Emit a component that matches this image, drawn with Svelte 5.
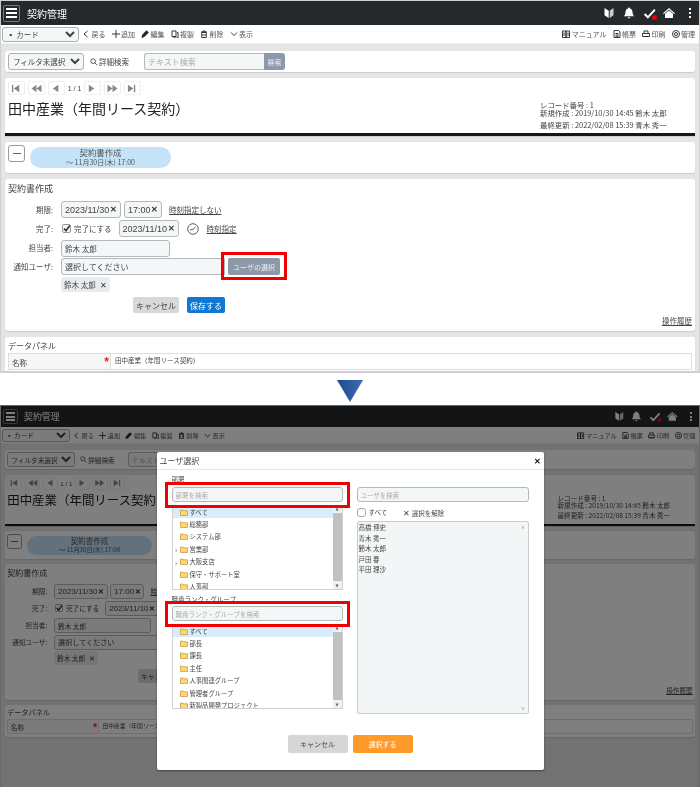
<script>
	const icons = {
		back: 'M5.5 1 2 4l3.5 3',
		plus: 'M4 0v8M0 4h8',
		pencil: 'M1 7.500l.5-2.500L5.500.8 7.300 2.500l-4 4z',
		copy: 'M1 1h4v5.5H1z M6 2.5h1V8H3V7',
		trash: 'M1 2h6M3 2V1h2v1M1.700 2.500h4.600V7.500H1.700z M3 4v2M5 4v2',
		down: 'M1 2.500 4 5.500 7 2.500',
		book: 'M.5 1h3.500v6.500H.5z M4 1h3.500v6.500H4z M2 2.500v3.500M6 2.500v3.500',
		doc: 'M1 .5h4.500L7 2v5.500H1z M2.500 3.500h3M2.500 5h3M2.500 6.300h3',
		print: 'M2 3V1h4v2 M.5 3.500h7v3h-7z M2 6.500h4',
		search: 'M6.300 6.300 9 9 M6.800 4A2.900 2.900 0 1 1 1 4a2.900 2.900 0 0 1 5.800 0z'
	};
	const leftTools = [
		['back', '戻る'],
		['plus', '追加'],
		['pencil', '編集'],
		['copy', '複製'],
		['trash', '削除'],
		['down', '表示']
	];
	const rightTools = [
		['book', 'マニュアル'],
		['doc', '帳票'],
		['print', '印刷']
	];
	const pagerLeft = ['M2 2h1.500v8H2z M10 2v8L4 6z', 'M7 2v8L1.500 6z M12.500 2v8L7 6z', 'M9 2v8L3 6z'];
	const pagerRight = ['M3 2v8l6-4z', 'M1.500 2v8L7 6z M7 2v8l5.500-4z', 'M2 2v8l6-4z M8.500 2H10v8H8.500z'];
	const departments = [
		['すべて', false],
		['総務部', false],
		['システム部', false],
		['営業部', true],
		['大阪支店', true],
		['保守・サポート室', false],
		['人事部', false]
	];
	const groups = ['すべて', '部長', '課長', '主任', '人事関連グループ', '管理者グループ', '新製品開発プロジェクト'];
	const users = ['高橋 博史', '青木 秀一', '鈴木 太郎', '戸田 春', '平田 理沙'];
</script>

{#snippet icon(name)}
	<svg class="icon" class:solid={name === 'pencil'} viewBox="0 0 8 8"><path d={icons[name]} /></svg>
{/snippet}

{#snippet folder()}
	<svg class="folder" viewBox="0 0 8 7">
		<path d="M.5 1h2.500l.7.8h3.800v4.700H.5z" fill="#ffd76a" stroke="#b08a2e" stroke-width=".6" />
	</svg>
{/snippet}

{#snippet treeList(rows)}
	<div class="tree">
		<div class="tree-rows">
			{#each rows as [label, hasChildren], i}
				<div class="tree-row" class:selected={i === 0}>
					<span class="caret">{hasChildren ? '›' : ''}</span>
					{@render folder()}
					<span>{label}</span>
				</div>
			{/each}
		</div>
		<div class="scrollbar">
			<span class="arrow">▲</span>
			<div class="thumb"></div>
			<span class="arrow">▼</span>
		</div>
	</div>
{/snippet}

{#snippet screen()}
	<header class="topbar">
		<div class="burger"><i></i><i></i><i></i></div>
		<span class="app-title">契約管理</span>
		<div class="top-icons">
			<svg viewBox="0 0 12 12" width="12" height="12"><path d="M1.500 1 5.700 3.700V11L1.500 8.300z" fill="#fff" /><path d="M10.500 1 6.700 3.700V11l3.800-2.700z" fill="#c4ced5" /></svg>
			<svg viewBox="0 0 12 12" width="12" height="12"><path d="M6 .5c.6 0 1 .4 1 .9 1.700.5 2.500 1.900 2.500 3.600 0 2 .6 3.200 1.800 4.300H.7C1.900 8.200 2.500 7 2.500 5c0-1.700.8-3.100 2.500-3.600 0-.5.4-.9 1-.9zM4.500 10.200h3L6 11.800z" fill="#fff" /></svg>
			<span class="check">
				<svg viewBox="0 0 12 12" width="13" height="13"><path d="M1.500 6.500 4.500 9.500 11 2.500" fill="none" stroke="#fff" stroke-width="1.800" /></svg>
				<b class="dot"></b>
			</span>
			<svg viewBox="0 0 12 12" width="12" height="12"><path d="M6 1 12 6.200 11.200 7 6 2.600.8 7 0 6.200z M6 3.500 10 6.800V11H2V6.800z" fill="#fff" /></svg>
			<span class="kebab"><i></i><i></i><i></i></span>
		</div>
	</header>

	<nav class="toolbar">
		<select class="view-select"><option>▪ カード</option></select>
		{#each leftTools as [name, label]}
			<span class="tool">{@render icon(name)}{label}</span>
		{/each}
		<div class="tools-right">
			{#each rightTools as [name, label]}
				<span class="tool">{@render icon(name)}{label}</span>
			{/each}
			<span class="tool">
				<svg class="icon" viewBox="0 0 8 8"><circle cx="4" cy="4" r="3.500" /><circle cx="4" cy="4" r="1.500" /></svg>管理
			</span>
		</div>
	</nav>

	<section class="panel filter">
		<select class="filter-select"><option>フィルタ未選択</option></select>
		<span class="detail-search">
			<svg viewBox="0 0 10 10" width="9" height="9" class="icon"><path d={icons.search} /></svg>詳細検索
		</span>
		<div class="search-group">
			<input placeholder="テキスト検索" />
			<button>検索</button>
		</div>
	</section>

	<section class="panel record">
		<div>
			<div class="pager">
				{#each pagerLeft as d}
					<span class="page-btn"><svg viewBox="0 0 14 12" width="13" height="11"><path d={d} /></svg></span>
				{/each}
				<span class="page-count">1 / 1</span>
				{#each pagerRight as d}
					<span class="page-btn"><svg viewBox="0 0 14 12" width="13" height="11"><path d={d} /></svg></span>
				{/each}
			</div>
			<h1>田中産業（年間リース契約）</h1>
		</div>
		<div class="meta">
			<div>レコード番号 : 1</div>
			<div>新規作成 : 2019/10/30 14:45 鈴木 太郎</div>
			<div class="updated">最終更新 : 2022/02/08 15:39 青木 秀一</div>
		</div>
	</section>

	<section class="panel status">
		<button class="collapse"><i></i></button>
		<div class="pill">
			<div>契約書作成</div>
			<small>～ 11月30日(木) 17:00</small>
		</div>
	</section>

	<section class="panel form">
		<h2>契約書作成</h2>
		<div class="row">
			<label>期限:</label>
			<span class="field date">2023/11/30<b>✕</b></span>
			<span class="field time">17:00<b>✕</b></span>
			<a class="link first" href="#top">時刻指定しない</a>
		</div>
		<div class="row">
			<label>完了:</label>
			<span class="checked">
				<svg viewBox="0 0 9 9" width="9" height="9"><rect x=".5" y=".5" width="8" height="8" rx="1.500" fill="#f4f7f8" stroke="#999" /><path d="M2 4.500 4 6.800 7.800 1.500" fill="none" stroke="#333" stroke-width="1.600" /></svg>
				完了にする
			</span>
			<span class="field date">2023/11/10<b>✕</b></span>
			<svg class="clock" viewBox="0 0 12 12" width="12" height="12"><circle cx="6" cy="6" r="5.300" /><path d="M3 7 6 6.300 8.500 4" /></svg>
			<a class="link" href="#top">時刻指定</a>
		</div>
		<div class="row">
			<label>担当者:</label>
			<span class="field person">鈴木 太郎</span>
		</div>
		<div class="row">
			<label>通知ユーザ:</label>
			<span class="field notify">選択してください</span>
			<div class="highlight on-button"><button class="pick-user">ユーザの選択</button></div>
		</div>
		<div class="row chips">
			<span class="chip">鈴木 太郎<b>✕</b></span>
		</div>
		<div class="actions">
			<button class="cancel">キャンセル</button>
			<button class="save">保存する</button>
		</div>
		<a class="link history" href="#top">操作履歴</a>
	</section>

	<section class="panel data">
		<h3>データパネル</h3>
		<div class="data-row">
			<div class="data-label">名称<span class="star">*</span></div>
			<div class="data-value">田中産業（年間リース契約）</div>
		</div>
	</section>
{/snippet}

<div class="shot shot-top">{@render screen()}</div>

<div class="arrow-down">
	<svg viewBox="0 0 26 22" width="26" height="22">
		<defs>
			<linearGradient id="arrow-fill" x1="0" x2="1" y1="0" y2="0">
				<stop offset="0" stop-color="#1c4a8f" />
				<stop offset="1" stop-color="#3d6db5" />
			</linearGradient>
		</defs>
		<path d="M0 0h26L13 22z" fill="url(#arrow-fill)" />
	</svg>
</div>

<div class="second">
	<div class="shot shot-bottom">{@render screen()}</div>
	<div class="overlay">
		<div class="modal">
			<div class="modal-head">
				<span>ユーザ選択</span>
				<b>✕</b>
			</div>
			<div class="modal-body">
				<div class="col">
					<div class="col-label">部署</div>
					<div class="highlight on-input"><input placeholder="部署を検索" /></div>
					{@render treeList(departments)}
					<div class="col-label second-label">職責ランク・グループ</div>
					<div class="highlight on-input"><input placeholder="職責ランク・グループを検索" /></div>
					{@render treeList(groups.map((g) => [g, false]))}
				</div>
				<div class="col right-col">
					<input class="user-search" placeholder="ユーザを検索" />
					<div class="select-row">
						<span class="round-check"></span>
						<span>すべて</span>
						<span class="clear"><b>✕</b> 選択を解除</span>
					</div>
					<div class="user-list">
						<div>
							{#each users as user}
								<div class="user">{user}</div>
							{/each}
						</div>
						<div class="user-scroll">
							<span class="arrow">▲</span>
							<span class="arrow">▼</span>
						</div>
					</div>
				</div>
			</div>
			<div class="modal-actions">
				<button class="modal-cancel">キャンセル</button>
				<button class="modal-ok">選択する</button>
			</div>
		</div>
	</div>
</div>

<style>
	:global(body) {
		background: #fff;
	}

	* {
		box-sizing: border-box;
	}

	.shot {
		font-family: "Noto Sans CJK JP", "Liberation Sans", sans-serif;
		background: #e4e5e4;
		border: 1px solid #cfd0cf;
		border-bottom-width: 2px;
		color: #444;
		overflow: hidden;
		font-size: 8px;
		text-spacing-trim: space-all;
		filter: blur(0.3px);
	}

	.shot-top {
		width: 700px;
		height: 373px;
	}

	.second {
		position: relative;
		height: 382px;
		overflow: hidden;
		font-family: "Noto Sans CJK JP", "Liberation Sans", sans-serif;
	}

	.shot-bottom {
		width: 786.5px;
		height: 430px;
		zoom: 0.89;
	}

	.arrow-down {
		height: 32px;
		padding-top: 7px;
		display: flex;
		justify-content: center;
	}

	.topbar {
		height: 24px;
		background: #25292b;
		display: flex;
		align-items: center;
		color: #fff;
		padding: 0 8px 0 2px;
	}

	.burger {
		width: 17px;
		height: 17px;
		border: 1px solid #777;
		border-radius: 2px;
		display: flex;
		flex-direction: column;
		justify-content: center;
		gap: 2px;
		padding: 0 2px;
	}

	.burger i {
		height: 2px;
		background: #fff;
	}

	.app-title {
		margin-left: 7px;
		font-size: 10px;
	}

	.top-icons {
		margin-left: auto;
		display: flex;
		align-items: center;
		gap: 8px;
	}

	.check {
		position: relative;
		display: flex;
		margin-right: -1px;
	}

	.dot {
		position: absolute;
		right: -1px;
		bottom: 0;
		width: 5px;
		height: 5px;
		border-radius: 50%;
		background: #e8000b;
	}

	.kebab {
		display: flex;
		flex-direction: column;
		gap: 2px;
		margin-left: 6px;
	}

	.kebab i {
		width: 2px;
		height: 2px;
		background: #fff;
	}

	.toolbar {
		height: 19px;
		background: #fff;
		display: flex;
		align-items: center;
		gap: 6px;
		padding: 0 4px 0 1px;
		font-size: 7px;
		border-bottom: 1px solid #eee;
	}

	.view-select {
		width: 77px;
		height: 15px;
		margin-right: -3px;
	}

	select {
		font: inherit;
		font-size: 7.5px;
		background: #f4f7f8;
		border: 1px solid #aab0b3;
		border-radius: 3px;
		color: #444;
		padding: 0;
	}

	.tool {
		display: inline-flex;
		align-items: center;
		gap: 1.500px;
		color: #555;
		white-space: nowrap;
	}

	.icon {
		width: 8px;
		height: 8px;
		fill: none;
		stroke: #222;
		stroke-width: 0.9;
		flex: none;
	}

	.icon.solid {
		fill: #222;
	}

	.tools-right {
		margin-left: auto;
		display: flex;
		gap: 6px;
	}

	.panel {
		background: #fff;
		margin: 6px 4px 0;
		border-radius: 3px;
		box-shadow: 0 1px 1px #ccc;
	}

	.filter {
		height: 21px;
		margin-top: 7px;
		display: flex;
		align-items: center;
		padding: 0 3px;
	}

	.filter-select {
		width: 76px;
		height: 17px;
	}

	.detail-search {
		display: inline-flex;
		align-items: center;
		gap: 1px;
		margin-left: 6px;
		width: 54px;
		font-size: 7.5px;
	}

	.search-group {
		display: flex;
		height: 17px;
	}

	.search-group input {
		width: 120px;
		border-radius: 3px 0 0 3px;
		border-right: none;
	}

	.search-group button {
		width: 21px;
		background: #8b99a8;
		color: #eef;
		border: none;
		border-radius: 0 3px 3px 0;
		font: inherit;
		font-size: 7px;
		padding: 0;
	}

	input {
		height: 100%;
		background: #f4f7f8;
		border: 1px solid #b4b8ba;
		border-radius: 3px;
		font: inherit;
		padding: 0 3px;
		outline: none;
	}

	input::placeholder {
		color: #aaa;
	}

	.record {
		height: 58px;
		display: flex;
		padding: 3px 3px 0;
		border-bottom: 3px solid #161616;
		border-radius: 3px 3px 0 0;
	}

	.pager {
		display: flex;
		align-items: center;
		gap: 3px;
		height: 14px;
	}

	.page-btn {
		width: 17px;
		height: 14px;
		border: 1px solid #eee;
		border-radius: 2px;
		display: flex;
		align-items: center;
		justify-content: center;
		fill: #888;
	}

	.page-count {
		font-family: "Liberation Sans", sans-serif;
		font-size: 7px;
		width: 15px;
		text-align: center;
		white-space: nowrap;
		margin: 0 -1px;
	}

	h1 {
		margin: 3px 0 0;
		font-size: 14px;
		font-weight: 400;
		line-height: 20px;
		color: #222;
	}

	.meta {
		margin-left: auto;
		width: 152px;
		padding-top: 20px;
		font-size: 7.400px;
		line-height: 7.500px;
		color: #444;
		white-space: nowrap;
	}

	.updated {
		margin-top: 4.500px;
	}

	.status {
		height: 31px;
		display: flex;
		padding: 3px;
		gap: 5px;
		margin-top: 6px;
	}

	.collapse {
		width: 17px;
		height: 17px;
		background: #fff;
		border: 1px solid #999;
		border-radius: 3px;
		display: flex;
		align-items: center;
		justify-content: center;
		padding: 0;
	}

	.collapse i {
		width: 8px;
		height: 1.500px;
		background: #666;
	}

	.pill {
		width: 141px;
		height: 21px;
		margin-top: 2px;
		border-radius: 11px;
		background: #c5e3f8;
		text-align: center;
		font-size: 8.400px;
		line-height: 11px;
		color: #555;
	}

	.pill small {
		display: block;
		font-size: 7px;
		line-height: 8px;
	}

	.form {
		height: 152px;
		position: relative;
		padding: 3px;
	}

	h2 {
		margin: 0 0 6px;
		font-size: 9px;
		font-weight: 400;
		line-height: 13px;
		color: #444;
	}

	.row {
		display: flex;
		align-items: center;
		height: 17px;
		margin-bottom: 2px;
	}

	.row label {
		width: 45px;
		margin-right: 8px;
		text-align: right;
		font-size: 7.5px;
		white-space: nowrap;
	}

	.field {
		height: 17px;
		display: inline-flex;
		align-items: center;
		justify-content: space-between;
		padding: 0 3px;
		margin-right: 3px;
		background: #f4f7f8;
		border: 1px solid #b4b8ba;
		border-radius: 3px;
		font-family: "Liberation Sans", "Noto Sans CJK JP", sans-serif;
		font-size: 9px;
		white-space: nowrap;
	}

	.date {
		width: 60px;
	}

	.time {
		width: 38px;
	}

	.field b {
		font-size: 8px;
		font-weight: 700;
		color: #333;
	}

	.link {
		color: #444;
		font-size: 7.500px;
		text-decoration: underline;
	}

	.first {
		margin-left: 4px;
	}

	.checked {
		display: inline-flex;
		align-items: center;
		gap: 3px;
		font-size: 7.500px;
		margin-right: 7px;
		margin-left: 1px;
	}

	.clock {
		fill: none;
		stroke: #333;
		stroke-width: 0.8;
		margin: 0 8px 0 5px;
	}

	.person {
		width: 109px;
		font-family: inherit;
		font-size: 7.500px;
		margin-top: 1px;
	}

	.notify {
		width: 164px;
		font-family: inherit;
		font-size: 8px;
		border-radius: 3px 0 0 3px;
	}

	.highlight {
		position: relative;
	}

	.highlight::after {
		content: "";
		position: absolute;
		border: 3px solid #f00000;
		pointer-events: none;
		z-index: 2;
	}

	.on-button::after {
		inset: -6px -7px -5px -7px;
	}

	.on-input {
		height: 15px;
	}

	.on-input input {
		width: 100%;
		font-size: 6.5px;
	}

	.on-input::after {
		inset: -5px -7px -6px -7px;
	}

	.pick-user {
		display: block;
		width: 52px;
		height: 17px;
		background: #8b99a8;
		color: #f0f0f0;
		border: none;
		border-radius: 2px;
		font: inherit;
		font-size: 7px;
		padding: 0;
	}

	.chips {
		margin-top: 2px;
		height: 15px;
		padding-left: 53px;
	}

	.chip {
		width: 49px;
		height: 15px;
		background: #e8ecef;
		border-radius: 3px;
		display: inline-flex;
		align-items: center;
		justify-content: space-between;
		padding: 0 3px;
		font-size: 7.500px;
	}

	.chip b {
		font-size: 8px;
		font-weight: 400;
		color: #333;
	}

	.actions {
		margin: 5px 0 0 125px;
		display: flex;
		gap: 8px;
	}

	.shot-bottom .actions {
		margin-left: 147px;
	}

	.actions button {
		height: 16px;
		border: none;
		border-radius: 2px;
		font: inherit;
		font-size: 8px;
		padding: 0;
	}

	.cancel {
		width: 46px;
		background: #d8d8d8;
		color: #444;
	}

	.save {
		width: 38px;
		background: #0f77d4;
		color: #fff;
	}

	.history {
		position: absolute;
		right: 3px;
		bottom: 5px;
	}

	.data {
		height: 36px;
		padding: 3px;
	}

	h3 {
		margin: 0 0 2px;
		font-size: 8px;
		font-weight: 400;
		line-height: 11px;
	}

	.data-row {
		display: flex;
		border: 1px solid #ddd;
		height: 17px;
	}

	.data-label {
		width: 102px;
		background: #f6f6f6;
		padding: 0 0 0 3px;
		border-right: 1px solid #ddd;
		font-size: 7.500px;
		line-height: 17px;
		display: flex;
		justify-content: space-between;
	}

	.star {
		color: #ec1c24;
		font-size: 12px;
		font-weight: 700;
		margin-right: 1px;
		font-family: "Liberation Sans", sans-serif;
	}

	.data-value {
		padding-left: 4px;
		font-size: 6.500px;
		line-height: 13px;
	}

	.overlay {
		position: absolute;
		inset: 0;
		z-index: 3;
		background: rgba(0, 0, 0, 0.5);
		display: flex;
		justify-content: center;
		padding-top: 47px;
	}

	.shot-bottom .on-button::after {
		display: none;
	}

	.modal {
		width: 387px;
		height: 318px;
		background: #fff;
		border-radius: 2px;
		color: #444;
		box-shadow: 0 1px 2px rgba(0, 0, 0, 0.4);
		font-size: 6.500px;
		text-spacing-trim: space-all;
		filter: blur(0.25px);
	}

	.modal-head {
		height: 18px;
		display: flex;
		justify-content: space-between;
		align-items: center;
		padding: 0 3px;
		font-size: 8px;
		border-bottom: 1px solid #e5e8ea;
	}

	.modal-head b {
		font-size: 8px;
		color: #111;
	}

	.modal-body {
		display: flex;
		padding: 0 15px;
		gap: 14px;
	}

	.col {
		width: 171px;
	}

	.right-col {
		width: 172px;
		padding-top: 17px;
	}

	.col-label {
		height: 17px;
		line-height: 18px;
		font-size: 6.500px;
	}

	.second-label {
		height: 14px;
		line-height: 14px;
		margin-top: 2px;
	}

	.tree {
		height: 85px;
		margin-top: 3px;
		border: 1px solid #cfd2d4;
		border-top: none;
		display: flex;
		justify-content: space-between;
		overflow: hidden;
	}

	.tree-rows {
		flex: 1;
	}

	.tree-row {
		height: 12.500px;
		display: flex;
		align-items: center;
		white-space: nowrap;
		font-size: 6.300px;
	}

	.tree-row:first-child {
		height: 13px;
		padding-top: 2px;
	}

	.selected {
		background: #d8ecfb;
	}

	.caret {
		width: 7px;
		text-align: center;
		font-size: 7px;
		line-height: 6px;
		color: #555;
	}

	.folder {
		width: 8px;
		height: 7px;
		margin-right: 2px;
		flex: none;
	}

	.scrollbar,
	.user-scroll {
		width: 9px;
		flex: none;
		display: flex;
		flex-direction: column;
		align-items: center;
		justify-content: space-between;
		background: #f1f1f1;
	}

	.user-scroll {
		background: none;
		padding: 1px 0;
	}

	.thumb {
		flex: 1;
		width: 100%;
		margin: 1px 0;
		background: #c1c1c1;
	}

	.arrow {
		font-size: 4px;
		line-height: 7px;
		color: #666;
		font-family: "DejaVu Sans", sans-serif;
	}

	.user-scroll .arrow {
		color: #bbb;
	}

	.user-search {
		display: block;
		width: 100%;
		height: 15px;
	}

	.select-row {
		height: 18px;
		display: flex;
		align-items: center;
		margin-top: 1px;
	}

	.round-check {
		width: 9px;
		height: 9px;
		border: 1px solid #aaa;
		border-radius: 3px;
		margin-right: 3px;
	}

	.clear {
		margin-left: 16px;
	}

	.clear b {
		font-weight: 400;
		font-size: 7.500px;
	}

	.user-list {
		height: 193px;
		background: #f3f6f7;
		border: 1px solid #c8cccf;
		border-radius: 2px;
		display: flex;
		justify-content: space-between;
		padding-left: 1px;
	}

	.user {
		height: 10.500px;
		line-height: 10.500px;
	}

	.modal-actions {
		display: flex;
		justify-content: center;
		gap: 5px;
		margin-top: 21px;
	}

	.modal-actions button {
		width: 60px;
		height: 18px;
		border: none;
		border-radius: 2px;
		font: inherit;
		font-size: 7px;
		padding: 0;
	}

	.modal-cancel {
		background: #d6d6d6;
		color: #444;
	}

	.modal-ok {
		background: #ff9a2b;
		color: #fff;
	}
</style>
